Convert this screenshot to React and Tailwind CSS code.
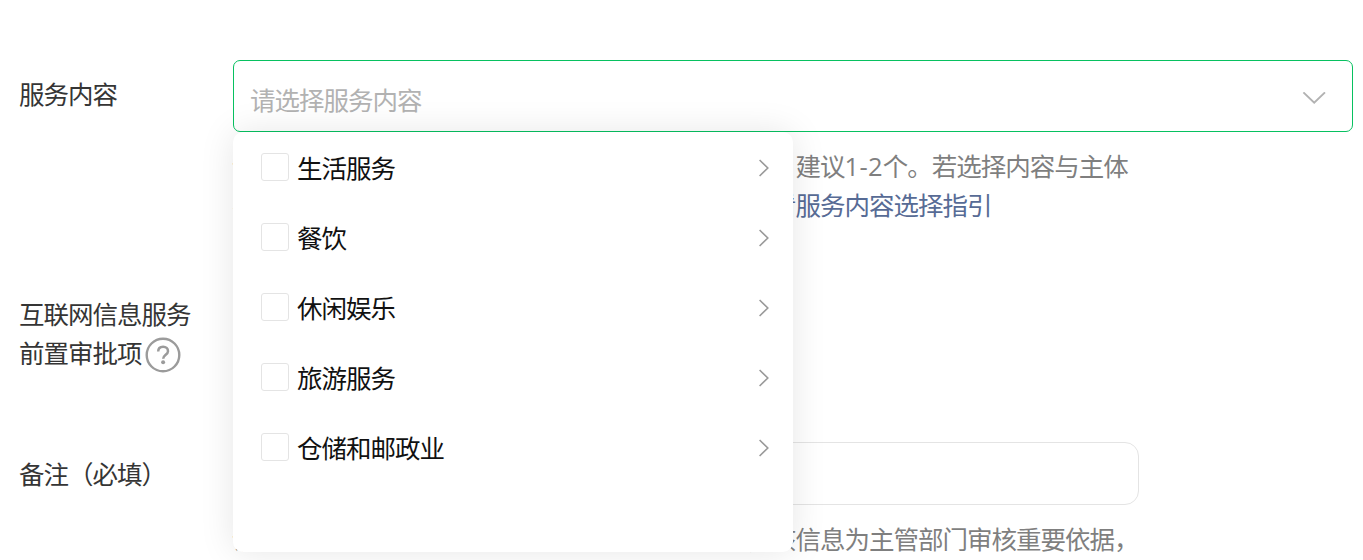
import React, { useState } from 'react';

const OPTIONS = ['生活服务', '餐饮', '休闲娱乐', '旅游服务', '仓储和邮政业'];

function HelpIcon() {
  return (
    <svg
      className="ml-[3px] mt-0.5 h-9 w-9 shrink-0"
      viewBox="0 0 36 36"
      fill="none"
      stroke="#9b9b9b"
    >
      <circle cx="18" cy="18" r="16.3" strokeWidth="2.4" />
      <path
        d="M13.2 14.6c0-3 2-4.9 4.9-4.9s4.9 1.8 4.9 4.5c0 3.5-4.8 3.7-4.8 7.6"
        strokeWidth="2.5"
      />
      <circle cx="18.1" cy="25.2" r="2" fill="#9b9b9b" stroke="none" />
    </svg>
  );
}

function Option({ label, checked, onToggle }) {
  return (
    <li className="flex h-[70px] items-center pl-7 pr-[23px]">
      <button
        type="button"
        role="checkbox"
        aria-checked={checked}
        aria-label={label}
        onClick={onToggle}
        className={[
          'h-7 w-7 rounded-[3px] border',
          checked ? 'border-[#07c160] bg-[#07c160]' : 'border-[#e4e4e4] bg-white',
        ].join(' ')}
      />
      <span className="ml-2 mt-[3px] flex-1 text-[#111]">{label}</span>
      <svg
        className="mt-px h-[18px] w-3"
        viewBox="0 0 12 18"
        fill="none"
        stroke="#999"
        strokeWidth="1.6"
      >
        <path d="M1.6 1 9.8 9l-8.2 8" />
      </svg>
    </li>
  );
}

export default function App() {
  const [selected, setSelected] = useState([]);

  const toggle = (label) => {
    setSelected((prev) =>
      prev.includes(label) ? prev.filter((item) => item !== label) : [...prev, label]
    );
  };

  return (
    <main className="h-[560px] w-[1363px] overflow-hidden bg-white pl-[19px] pt-[60px] font-['Open_Sans','Noto_Sans_CJK_SC',sans-serif] text-[25.5px] leading-[39px] tracking-[-1px] text-[#353535]">
      <div className="flex h-[235px]">
        <div className="w-[214px] shrink-0 pt-[15px]">服务内容</div>
        <div className="relative w-[1120px]">
          <div className="flex h-[72px] items-center justify-between rounded-[7px] border border-[#07c160] pl-4 pr-[26px]">
            <span className="mt-2 text-[#b2b2b2]">请选择服务内容</span>
            <svg
              className="mt-[3px] h-3 w-6"
              viewBox="0 0 24 12"
              fill="none"
              stroke="#b2b2b2"
              strokeWidth="1.9"
            >
              <path d="M1.4 .4 12.2 10.7 23 .4" />
            </svg>
          </div>
          <p className="-ml-px mt-[15px] whitespace-nowrap text-[#7f7f7f]">
            请根据小程序自身的功能，选择最符合的服务内容，建议
            <span className="tracking-[0.3px]">1-2</span>个。若选择内容与主体
            <br />
            不符，可能会影响小程序的审核结果，可以点击<span className="text-[#576b95]">查看服务内容选择指引</span>
          </p>

          <ul className="absolute left-0 top-[72px] h-[420px] w-[560px] rounded-[10px] bg-white shadow-[0_0_35px_rgba(0,0,0,0.1)]">
            {OPTIONS.map((label) => (
              <Option
                key={label}
                label={label}
                checked={selected.includes(label)}
                onToggle={() => toggle(label)}
              />
            ))}
          </ul>
        </div>
      </div>

      <div className="h-[147px]">
        <div>互联网信息服务</div>
        <div className="flex h-[39px] items-center">
          前置审批项
          <HelpIcon />
        </div>
      </div>

      <div className="flex">
        <div className="w-[214px] shrink-0 pt-[13px]">备注（必填）</div>
        <div className="w-[906px]">
          <div className="h-[63px] rounded-[14px] border border-[#e4e4e4]" />
          <p className="-ml-px mt-[15px] whitespace-nowrap text-[#7f7f7f]">
            请根据实际情况如实填写小程序的服务内容备注，该信息为主管部门审核重要依据，
          </p>
        </div>
      </div>
    </main>
  );
}
